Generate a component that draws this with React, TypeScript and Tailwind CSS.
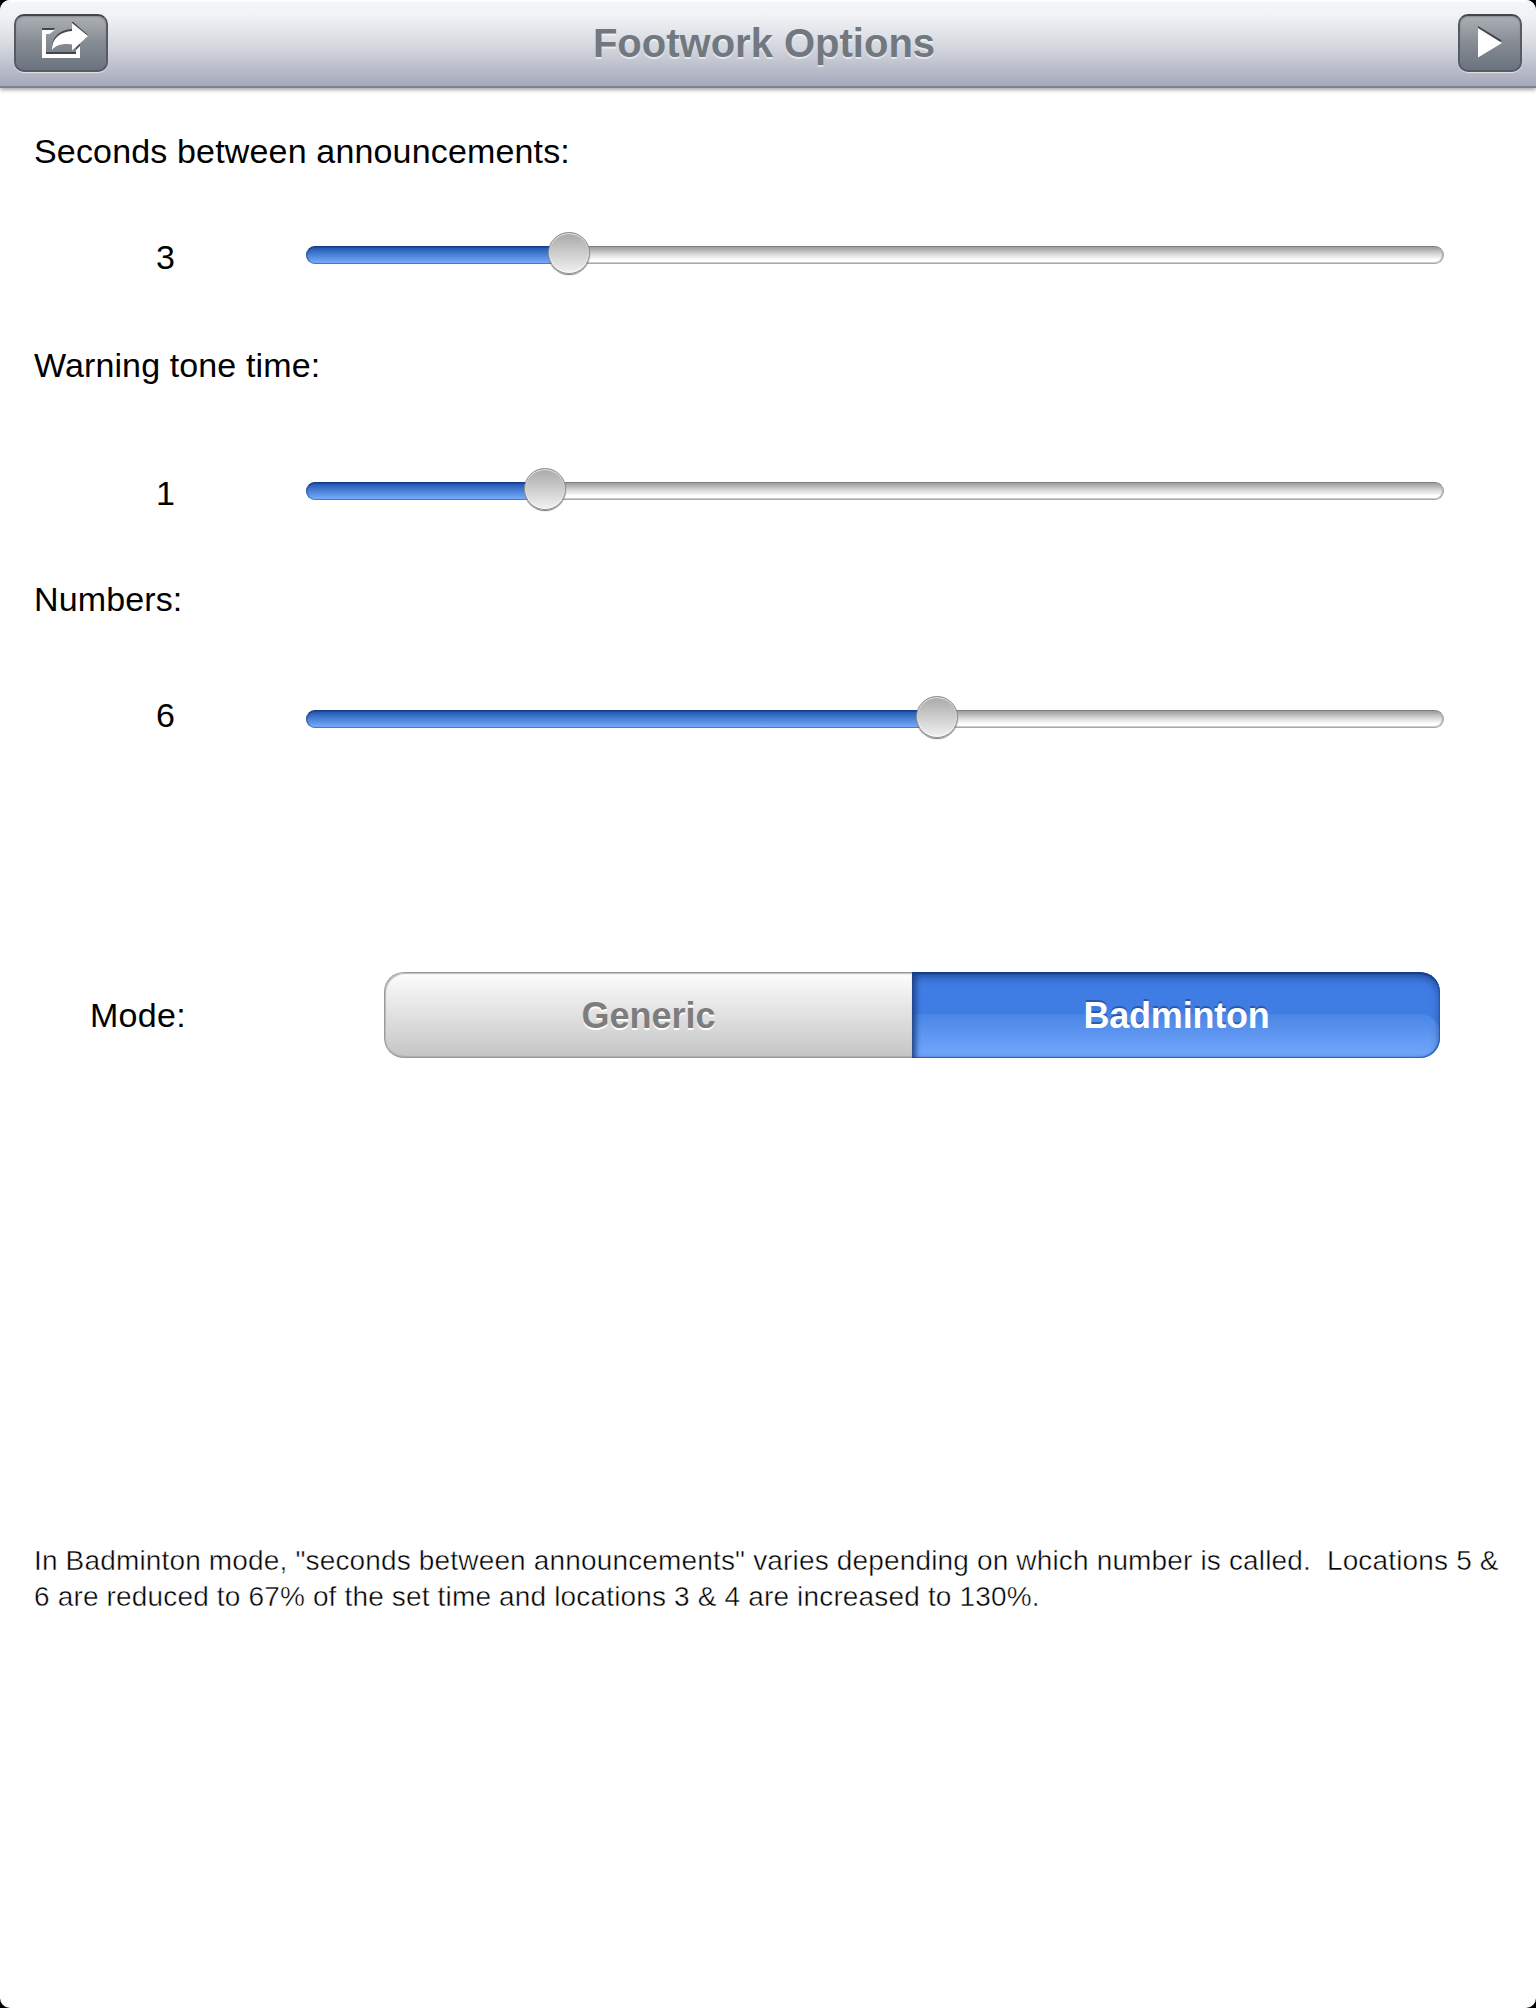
import React from "react";

type SliderRowProps = {
  value: string;
  fill: number;
  label: string;
  className: string;
  valueClass: string;
};

function SliderRow({ value, fill, label, className, valueClass }: SliderRowProps) {
  return (
    <div className={`flex h-[44px] items-start ${className}`}>
      <div className={`w-[306px] pl-[156px] text-[34px] leading-[40px] ${valueClass}`}>{value}</div>
      <div className="relative mt-[14px] h-[18px] w-[1138px]" role="slider" aria-label={label} aria-valuenow={Number(value)}>
        <div className="h-full w-full rounded-full border border-[#a3a3a3] border-t-[#7f7f7f] border-b-[#a8a8a8] bg-linear-to-b from-[#9b9b9b] via-[#d8d8d8] via-45% to-white to-80% shadow-[inset_-1px_0_1px_#b0b0b0,inset_0_-1px_0_#d0d0d0]" />
        <div
          className="absolute top-0 left-0 h-[18px] rounded-l-full border border-r-0 border-[#2c5db0] border-t-[#123c8c] border-b-[#4379c9] bg-linear-to-b from-[#2455ac] via-[#4a82d8] via-50% to-[#75acfa] shadow-[inset_0_1px_1px_#1c489c]"
          style={{ width: fill }}
        />
        <div
          className="absolute top-[-14px] size-[42px] rounded-full border border-[#8f8f8f] bg-linear-to-b from-[#a9a9a9] to-[#f2f2f2] shadow-[0_1px_1px_#777,inset_0_1px_1px_#e8e8e8,inset_0_-1px_1px_#fff]"
          style={{ left: fill - 21 }}
        />
      </div>
    </div>
  );
}

const BUTTON =
  "flex h-[58px] items-center rounded-[10px] border-2 border-[#565b63] border-t-[#44464a] bg-linear-to-b from-[#adb0b5] via-[#868c94] via-50% to-[#6a727e] shadow-[0_1px_1px_#e2e4ea,inset_0_1px_2px_#858a91]";

export default function App() {
  return (
    <div className="h-[2008px] w-[1536px] overflow-hidden bg-black font-['Liberation_Sans',Arial,sans-serif] text-black">
      <div className="h-full w-full overflow-hidden rounded-[10px] bg-white">
        <header className="flex h-[88px] items-start justify-between border-b-2 border-[#7d8298] bg-[linear-gradient(to_bottom,#ffffff_0px,#f4f5f7_3px,#f1f2f5_16px,#d5d8df_46px,#a5a9b9_86px)] px-[14px] pt-[14px] shadow-[0_2px_4px_rgba(0,0,0,0.35)]">
          <button aria-label="Share" className={`w-[94px] ${BUTTON}`}>
            <svg className="-mt-px ml-[24px] block" width="50" height="42" viewBox="0 0 50 42">
              <g fill="#42454a">
                <path d="M2 6H15L12 10H6V30H36V26L40 22V34H2Z" />
                <path d="M32 -1L48 13L32 27V21C23 20 16 22 12 26C12 14 20 8 32 7Z" />
              </g>
              <g fill="#fff">
                <path d="M2 8H15C13 9 11 11 9.5 12H6V32H36V28L40 24V36H2Z" />
                <path d="M32 1L48 14L32 28.500V22.500C23 21 16 23 12 28C12 16 20 10 32 9Z" />
              </g>
            </svg>
          </button>
          <h1 className="mt-[7px] mr-[38px] text-[40px] leading-[44px] font-bold text-[#717880] [text-shadow:0_2px_0_rgba(255,255,255,0.55)]">
            Footwork Options
          </h1>
          <button aria-label="Start" className={`w-[64px] ${BUTTON}`}>
            <svg className="ml-[18px] block" width="26" height="34" viewBox="0 0 26 34">
              <path d="M0 0L24 14.500L0 29Z" fill="#42454a" />
              <path d="M0 2L24 17L0 31.500Z" fill="#fff" />
            </svg>
          </button>
        </header>

        <main>
          <h2 className="mt-[43px] pl-[34px] text-[34px] leading-[40px] tracking-[0.16px]">Seconds between announcements:</h2>
          <SliderRow label="Seconds between announcements" value="3" fill={263} className="mt-[61px]" valueClass="mt-[5px]" />
          <h2 className="mt-[69px] pl-[34px] text-[34px] leading-[40px] tracking-[0.12px]">Warning tone time:</h2>
          <SliderRow label="Warning tone time" value="1" fill={239} className="mt-[83px]" valueClass="mt-[5px]" />
          <h2 className="mt-[67px] pl-[34px] text-[34px] leading-[40px] tracking-[0.12px]">Numbers:</h2>
          <SliderRow label="Numbers" value="6" fill={631} className="mt-[77px]" valueClass="-mt-px" />

          <section className="mt-[232px] flex h-[86px]">
            <div className="w-[384px] pt-[23px] pl-[90px] text-[34px] leading-[40px] tracking-[0.3px]">Mode:</div>
            <button className="h-[86px] w-[528px] rounded-l-[20px] border border-r-0 border-[#9a9a9a] bg-linear-to-b from-[#fdfdfd] to-[#c5c5c5] pt-[2px] text-[36px] leading-[40px] font-bold text-[#7d7d7d] shadow-[inset_1px_1px_1px_#bbb,inset_0_-1px_1px_#aaa] [text-shadow:0_2px_0_#fff]">
              Generic
            </button>
            <button className="h-[86px] w-[528px] overflow-hidden rounded-r-[20px] bg-[#3f7ce4]">
              <span className="flex h-full flex-col pt-[42px]">
                <span className="block h-[44px] rounded-tr-[20px] bg-linear-to-b from-[#4a86e6] to-[#74a8fd]" />
              </span>
              <span className="relative -mt-[86px] flex h-[86px] items-center justify-center rounded-r-[20px] pt-[2px] pl-px text-[36px] leading-[40px] font-bold tracking-[-0.2px] text-white shadow-[inset_0_2px_1px_#173e88,inset_0_5px_9px_rgba(18,50,110,0.65),inset_5px_0_5px_-1px_rgba(30,65,130,0.7),inset_-1px_-1px_1px_#356bc5] [text-shadow:0_-2px_0_rgba(35,75,150,0.75)]">
                Badminton
              </span>
            </button>
          </section>

          <p className="mt-[485px] pl-[34px] text-[28px] leading-[36px] tracking-[0.16px] whitespace-pre text-black [-webkit-text-stroke:0.45px_white]">
            {'In Badminton mode, "seconds between announcements" varies depending on which number is called.  Locations 5 &\n6 are reduced to 67% of the set time and locations 3 & 4 are increased to 130%.'}
          </p>
        </main>
      </div>
    </div>
  );
}
